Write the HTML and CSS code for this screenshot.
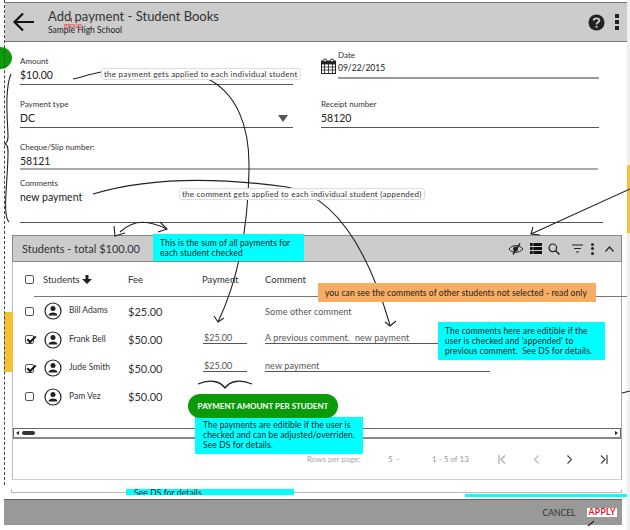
FILE: index.html
```html
<!DOCTYPE html>
<html lang="en">

<head>
    <meta charset="UTF-8">
    <title>Add payment - Student Books</title>
    <link rel="stylesheet" href="styles.css">
</head>

<body>
    <div class="page">
        <!-- Top bar -->
        <header class="top-bar">
            <svg class="back-icon" width="22" height="20" viewBox="0 0 22 20">
                <path d="M21 10H2M10 1.500L1.500 10L10 18.500" fill="none" stroke="#111" stroke-width="2.200" />
            </svg>
            <div class="top-titles">
                <h1>Add payment - Student Books</h1>
                <p>Sample High School</p>
            </div>
            <svg class="help-icon" width="17" height="17" viewBox="0 0 18 18">
                <circle cx="9" cy="9" r="8.500" fill="#222" />
                <path d="M6 7C6 3.800 12 3.800 12 7C12 9 9 9 9 11" fill="none" stroke="#ccc" stroke-width="2" />
                <rect x="8" y="12.500" width="2" height="2" fill="#ccc" />
            </svg>
            <div class="dots"><i></i><i></i><i></i></div>
        </header>

        <!-- Form fields -->
        <form class="form-grid">
            <div class="field">
                <label>Amount</label>
                <div class="value">$10.00</div>
            </div>
            <div class="date-field">
                <svg class="cal-icon" width="15" height="16" viewBox="0 0 15 16">
                    <rect x="0.500" y="3" width="14" height="12.500" fill="none" stroke="#222" />
                    <path d="M0 6H15M0 9H15M0 12H15M3.500 6V15M7.500 6V15M11.500 6V15" stroke="#222" stroke-width="0.800" />
                    <rect x="0.500" y="3" width="14" height="3" fill="#222" />
                    <circle cx="4" cy="2.500" r="1.500" fill="#fff" stroke="#222" />
                    <circle cx="11" cy="2.500" r="1.500" fill="#fff" stroke="#222" />
                </svg>
                <div class="date-inner">
                    <label>Date</label>
                    <div class="value small">09/22/2015</div>
                </div>
            </div>
            <div class="field select-field">
                <label>Payment type</label>
                <div class="value">DC</div>
                <span class="caret"></span>
            </div>
            <div class="field">
                <label>Receipt number</label>
                <div class="value">58120</div>
            </div>
            <div class="field wide thick">
                <label>Cheque/Slip number:</label>
                <div class="value">58121</div>
            </div>
            <div class="field wide comments">
                <label>Comments</label>
                <div class="value">new payment</div>
            </div>
        </form>

        <!-- Students panel -->
        <section class="panel">
            <div class="panel-head">
                <h2>Students - total $100.00</h2>
                <div class="panel-tools">
                    <svg width="16" height="12" viewBox="0 0 16 12">
                        <path d="M1 6C4 1.500 11 1.500 15 6C11 10.500 4 10.500 1 6Z" fill="none" stroke="#222" />
                        <circle cx="7.500" cy="6" r="2.500" fill="#222" />
                        <path d="M5 11.500L12 0.500" stroke="#222" stroke-width="1.400" />
                    </svg>
                    <svg width="12" height="11" viewBox="0 0 12 11">
                        <path d="M0 0H12V3H0ZM0 4H12V7H0ZM0 8H12V11H0Z" fill="#111" />
                        <path d="M3 0V11" stroke="#ccc" stroke-width="0.600" />
                    </svg>
                    <svg width="12" height="12" viewBox="0 0 12 12">
                        <circle cx="4.800" cy="4.800" r="3.800" fill="none" stroke="#222" stroke-width="1.200" />
                        <path d="M7.500 7.500L11.500 11.500" stroke="#222" stroke-width="1.500" />
                    </svg>
                    <svg width="11" height="9" viewBox="0 0 11 9">
                        <path d="M0 1H11M2 4.500H9M4 8H7" stroke="#222" stroke-width="1.200" />
                    </svg>
                    <div class="dots small"><i></i><i></i><i></i></div>
                    <svg width="9" height="6" viewBox="0 0 9 6">
                        <path d="M0.500 5.500L4.500 1L8.500 5.500" fill="none" stroke="#222" stroke-width="1.200" />
                    </svg>
                </div>
            </div>

            <div class="table-head">
                <span class="check"></span>
                <span class="col-students">Students
                    <svg class="down" width="10" height="9" viewBox="0 0 10 9">
                        <path d="M3.500 0H6.500V4H10L5 9L0 4H3.500Z" fill="#222" />
                    </svg>
                </span>
                <span>Fee</span>
                <span>Payment</span>
                <span>Comment</span>
            </div>

            <div class="row">
                <span class="check"></span>
                <svg class="avatar" width="18" height="18" viewBox="0 0 18 18"><use href="#person" /></svg>
                <span class="name">Bill Adams</span>
                <span class="fee">$25.00</span>
                <span></span>
                <span class="comment">Some other comment</span>
            </div>
            <div class="row">
                <span class="check on"></span>
                <svg class="avatar" width="18" height="18" viewBox="0 0 18 18"><use href="#person" /></svg>
                <span class="name">Frank Bell</span>
                <span class="fee">$50.00</span>
                <span class="pay">$25.00</span>
                <span class="comment edit">A previous comment.&nbsp; new payment</span>
            </div>
            <div class="row">
                <span class="check on"></span>
                <svg class="avatar" width="18" height="18" viewBox="0 0 18 18"><use href="#person" /></svg>
                <span class="name">Jude Smith</span>
                <span class="fee">$50.00</span>
                <span class="pay">$25.00</span>
                <span class="comment edit">new payment</span>
            </div>
            <div class="row">
                <span class="check"></span>
                <svg class="avatar" width="18" height="18" viewBox="0 0 18 18"><use href="#person" /></svg>
                <span class="name">Pam Vez</span>
                <span class="fee">$50.00</span>
                <span></span>
                <span></span>
            </div>

            <div class="scrollbar">
                <span class="arrow-l"></span>
                <span class="thumb"></span>
                <span class="arrow-r"></span>
            </div>

            <div class="pager">
                <span class="rows-label">Rows per page:</span>
                <span class="rows-num">5 &nbsp;<small>-</small></span>
                <span class="rows-range">1 - 5 of 13</span>
                <svg width="8" height="9" viewBox="0 0 8 9"><path d="M1 0V9M7 0.500L3 4.500L7 8.500" fill="none" stroke="#aaa" stroke-width="1.200" /></svg>
                <svg width="5" height="9" viewBox="0 0 5 9"><path d="M4.500 0.500L0.500 4.500L4.500 8.500" fill="none" stroke="#bbb" stroke-width="1.200" /></svg>
                <svg width="5" height="9" viewBox="0 0 5 9"><path d="M0.500 0.500L4.500 4.500L0.500 8.500" fill="none" stroke="#444" stroke-width="1.200" /></svg>
                <svg width="8" height="9" viewBox="0 0 8 9"><path d="M7 0V9M1 0.500L5 4.500L1 8.500" fill="none" stroke="#444" stroke-width="1.200" /></svg>
            </div>
        </section>

        <div class="outer-line"></div>

        <footer class="bottom-bar">
            <span class="cancel">CANCEL</span>
            <span class="apply">APPLY</span>
        </footer>

        <!-- Review annotations laid over the wireframe -->
        <span class="strip-right"></span>
        <span class="mark-green"></span>
        <span class="mark-yellow"></span>
        <span class="mark-yellow-right"></span>
        <span class="dash-line"></span>
        <span class="group-tick"></span>
        <span class="group-tag">group</span>

        <svg class="sketch" width="630" height="530" viewBox="0 0 630 530">
            <symbol id="person" viewBox="0 0 18 18">
                <circle cx="9" cy="9" r="8" fill="#fff" stroke="#222" stroke-width="1.200" />
                <circle cx="9" cy="6.500" r="2.500" fill="#222" />
                <path d="M4.500 13.500C4.500 9.500 13.500 9.500 13.500 13.500Z" fill="#222" />
            </symbol>
            <g fill="none" stroke="#222" stroke-width="1.100">
                <path d="M73 79C82 77 90 74 101 72" />
                <path d="M206 78C236 92 250 125 249 170C248 230 238 280 218 322" />
                <path d="M214 316L218 322L224 318" />
                <path d="M93 194C140 180 200 175 287 187C330 195 365 240 390 325" />
                <path d="M385 322L390 326L396 321" />
                <path d="M120 232C135 218 150 221 167 229" />
                <path d="M114 226L115 236L125 233M160 222L167 229L158 232" />
                <path d="M630 189L531 234M533 227L531 234L540 235" />
                <path d="M11 74C4 90 8 125 8 137C8 142 6 143 5 144C8 145 8 148 8 152C8 180 2 215 9 222" />
                <path d="M198 384C210 379 220 381 225 388C230 381 240 379 252 384" stroke-width="1.300" />
                <path d="M622 393L630 391M588 526L594 521" />
            </g>
        </svg>

        <span class="bubble bubble-pay">the payment gets applied to each individual student</span>
        <span class="bubble bubble-com">the comment gets applied to each individual student (appended)</span>

        <div class="note note-sum">This is the sum of all payments for<br>each student checked</div>
        <div class="note note-orange">you can see the comments of other students not selected - read only</div>
        <div class="note note-comments">The comments here are editible if the<br>user is checked and 'appended' to<br>previous comment.&nbsp; See DS for details.</div>
        <div class="note note-payments">The payments are editible if the user is<br>checked and can be adjusted/overriden.<br>See DS for details.</div>
        <div class="pill">PAYMENT AMOUNT PER STUDENT</div>
        <div class="note note-cut">See DS for details</div>
        <span class="cyan-line"></span>
    </div>
</body>

</html>
```

FILE: styles.css
```css
* {
    margin: 0;
    padding: 0;
    box-sizing: border-box;
}

body {
    background: white;
    font-family: 'Lato', 'Open Sans', sans-serif;
    color: #333;
    overflow: hidden;
}

.page {
    position: relative;
    width: 630px;
    height: 530px;
    padding-top: 2px;
    overflow: hidden;
}

/* Top bar */
.top-bar {
    display: flex;
    align-items: center;
    height: 40px;
    margin-left: 5px;
    margin-right: 3px;
    padding: 0 8px 0 8px;
    background: #ccc;
    border-top: 1px solid #777;
    border-bottom: 1px solid #777;
}

.back-icon {
    margin-right: 13px;
}

.top-titles {
    flex: 1;
}

.top-titles h1 {
    font-size: 13px;
    font-weight: normal;
    line-height: 16px;
}

.top-titles p {
    font-size: 8.500px;
    line-height: 12px;
    color: #222;
}

.help-icon {
    margin-right: 10px;
}

.dots {
    display: flex;
    flex-direction: column;
    gap: 2px;
}

.dots i {
    display: block;
    width: 4px;
    height: 4px;
    background: #222;
}

.dots.small {
    gap: 1.500px;
}

.dots.small i {
    width: 3px;
    height: 3px;
    border-radius: 50%;
}

/* Form */
.form-grid {
    display: grid;
    grid-template-columns: 273px 278px;
    column-gap: 28px;
    padding-left: 20px;
}

.field {
    height: 43px;
    padding-top: 13px;
    border-bottom: 1px solid #555;
}

.field label,
.date-inner label {
    display: block;
    font-size: 8px;
    line-height: 12px;
    color: #333;
}

.value {
    margin-top: 1px;
    font-size: 10.500px;
    line-height: 15px;
    color: #222;
}

.value.small {
    margin-top: 0;
    font-size: 8.500px;
}

.date-field {
    display: flex;
    height: 43px;
}

.cal-icon {
    margin: 16px 2px 0 0;
}

.date-inner {
    flex: 1;
    height: 37px;
    padding-top: 7px;
    border-bottom: 2px solid #999;
}

.select-field {
    position: relative;
}

.caret {
    position: absolute;
    right: 5px;
    bottom: 5px;
    border-left: 5px solid transparent;
    border-right: 5px solid transparent;
    border-top: 7px solid #555;
}

.wide {
    grid-column: 1 / 3;
}

.thick {
    width: 578px;
    height: 42px;
    border-bottom: 2px solid #aaa;
}

.comments {
    width: 583px;
    height: 53px;
    padding-top: 7px;
}

/* Students panel */
.panel {
    width: 610px;
    height: 245px;
    margin: 12px 0 0 12px;
    border-left: 1px solid #bbb;
    border-right: 1px solid #aaa;
    border-bottom: 1px solid #ccc;
}

.panel-head {
    display: flex;
    align-items: center;
    justify-content: space-between;
    height: 27px;
    margin: 0 -1px;
    padding: 0 7px 0 9px;
    background: #ccc;
    border: 1px solid #888;
}

.panel-head h2 {
    font-size: 11px;
    font-weight: normal;
}

.panel-tools {
    display: flex;
    align-items: center;
    gap: 6px;
}

.panel-tools svg:nth-child(3) {
    margin-right: 6px;
}

.panel-tools svg:nth-child(4) {
    margin-right: 2px;
}

.panel-tools svg:nth-child(6) {
    margin-left: 5px;
}

.table-head {
    position: relative;
    display: grid;
    grid-template-columns: 8px 95px 74px 63px 1fr;
    align-items: center;
    height: 35px;
    margin-left: 12px;
    font-size: 9.500px;
}

.table-head::after {
    content: "";
    position: absolute;
    left: 9px;
    right: -10px;
    bottom: 0;
    border-bottom: 1px solid #777;
}

.col-students {
    display: flex;
    align-items: center;
    gap: 2px;
    padding-left: 10px;
}

.row {
    display: grid;
    grid-template-columns: 8px 36px 59px 74px 63px 1fr;
    align-items: center;
    height: 28.500px;
    margin-left: 12px;
}

.check {
    position: relative;
    width: 9px;
    height: 9px;
    border: 1px solid #555;
    border-radius: 2px;
    background: #fff;
}

.check.on::after {
    content: "";
    position: absolute;
    left: 1px;
    top: 0;
    width: 7px;
    height: 3px;
    border-left: 2px solid #111;
    border-bottom: 2px solid #111;
    transform: rotate(-45deg);
}

.avatar {
    margin-left: 11px;
}

.name {
    font-size: 8.500px;
    color: #333;
    margin-top: -2px;
}

.fee {
    font-size: 11px;
}

.pay {
    width: 44px;
    margin: -4px 0 0 1px;
    padding-left: 1px;
    font-size: 9px;
    line-height: 11px;
    border-bottom: 1px solid #555;
    color: #555;
}

.comment {
    font-size: 9px;
    letter-spacing: 0.1px;
    color: #555;
}

.comment.edit {
    width: 225px;
    margin-top: -4px;
    line-height: 11px;
    border-bottom: 1px solid #555;
}

.scrollbar {
    display: flex;
    align-items: center;
    height: 11px;
    margin-top: 17px;
    padding: 0 2px;
    background: #fff;
    border: 1px solid #666;
    border-bottom: 2px solid #888;
}

.arrow-l {
    border-right: 3px solid #222;
    border-top: 2px solid transparent;
    border-bottom: 2px solid transparent;
}

.thumb {
    width: 13px;
    height: 4px;
    margin-left: 3px;
    border-radius: 2px;
    background: #333;
}

.arrow-r {
    margin-left: auto;
    border-left: 3px solid #222;
    border-top: 2px solid transparent;
    border-bottom: 2px solid transparent;
}

.pager {
    display: flex;
    align-items: center;
    height: 40px;
    font-size: 8px;
    white-space: nowrap;
    color: #aaa;
}

.pager > * {
    flex-shrink: 0;
}

.rows-label {
    margin-left: 294px;
    width: 58px;
}

.rows-num {
    margin-left: 23px;
    width: 15px;
    color: #999;
}

.rows-range {
    margin: 0 28px 0 29px;
    width: 38px;
    color: #999;
}

.pager svg {
    margin-right: 28px;
}

.pager svg:last-child {
    margin-right: 0;
}

.outer-line {
    width: 611px;
    height: 4px;
    margin: 9px 0 0 11px;
    border-bottom: 1px solid #bbb;
    border-left: 1px solid #bbb;
    border-right: 1px solid #bbb;
}

/* Bottom bar */
.bottom-bar {
    display: flex;
    align-items: center;
    justify-content: flex-end;
    gap: 12px;
    height: 26px;
    margin: 6px 8px 0 4px;
    padding-right: 5px;
    background: #999;
    border-top: 1px solid #666;
}

.cancel {
    font-size: 8.500px;
    color: #333;
}

.apply {
    padding: 0 1px;
    background: #fff;
    color: #e8112d;
    font-size: 8.500px;
    font-weight: bold;
    letter-spacing: 0.4px;
    line-height: 9px;
}

/* Annotations */
.strip-right {
    position: absolute;
    right: 0;
    top: 0;
    bottom: 0;
    width: 3px;
    background: #f0f0f0;
}

.mark-green {
    position: absolute;
    left: -12px;
    top: 47px;
    width: 24px;
    height: 22px;
    border-radius: 50%;
    background: #0a9a0a;
}

.mark-yellow {
    position: absolute;
    left: 4px;
    top: 312px;
    width: 9px;
    height: 60px;
    background: #f2c232;
}

.mark-yellow-right {
    position: absolute;
    right: 0;
    top: 165px;
    width: 3px;
    height: 68px;
    background: #f2c232;
}

.dash-line {
    position: absolute;
    left: 4px;
    top: 0;
    height: 485px;
    border-left: 1px dashed #444;
}

.group-tick {
    position: absolute;
    left: 71px;
    top: 18px;
    height: 4px;
    border-left: 1px solid #e8333a;
}

.group-tag {
    position: absolute;
    left: 64px;
    top: 22px;
    font-size: 7px;
    line-height: 7px;
    color: #e8333a;
}

.sketch {
    position: absolute;
    left: 0;
    top: 0;
    pointer-events: none;
}

.bubble {
    position: absolute;
    padding: 0 2px;
    background: #fff;
    border: 1px solid #ddd;
    border-radius: 3px;
    font-size: 8px;
    line-height: 10px;
    letter-spacing: 0.25px;
    white-space: nowrap;
    color: #333;
}

.bubble-pay {
    left: 101px;
    top: 68px;
}

.bubble-com {
    left: 179px;
    top: 188px;
}

.note {
    position: absolute;
    background: #00ffff;
    font-size: 8.500px;
    line-height: 10px;
    letter-spacing: 0.1px;
    white-space: nowrap;
    color: #222;
}

.note-sum {
    left: 153px;
    top: 234px;
    width: 151px;
    height: 27px;
    padding: 4px 7px;
}

.note-orange {
    left: 318px;
    top: 283px;
    width: 278px;
    height: 19px;
    padding: 5px 7px;
    background: #f7ad63;
}

.note-comments {
    left: 438px;
    top: 322px;
    width: 167px;
    height: 38px;
    padding: 4px 7px;
}

.note-payments {
    left: 195px;
    top: 417px;
    width: 168px;
    height: 37px;
    padding: 3px 8px;
}

.note-cut {
    left: 126px;
    top: 489px;
    width: 168px;
    height: 6px;
    padding-left: 8px;
    overflow: hidden;
    line-height: 9px;
}

.pill {
    position: absolute;
    left: 188px;
    top: 394px;
    width: 150px;
    height: 24px;
    border-radius: 12px;
    background: #0a9a0a;
    color: #fff;
    font-size: 8px;
    font-weight: bold;
    line-height: 24px;
    text-align: center;
    white-space: nowrap;
}

.cyan-line {
    position: absolute;
    left: 465px;
    top: 494px;
    width: 162px;
    height: 3px;
    background: #00ffff;
}
```
